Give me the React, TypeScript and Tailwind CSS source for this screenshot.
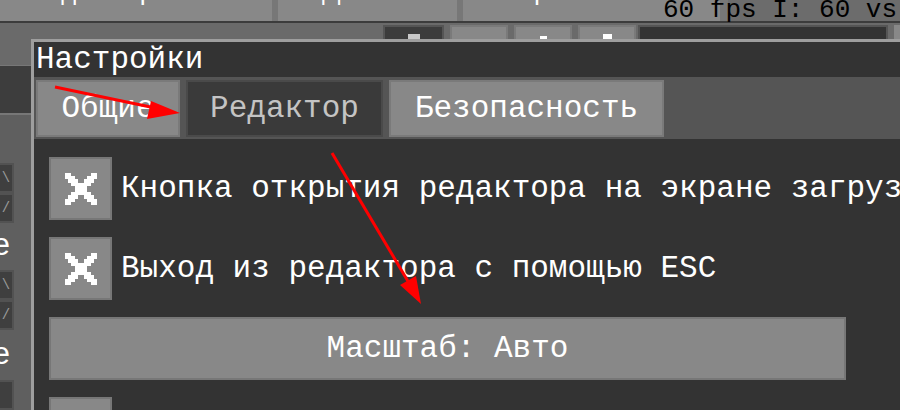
import React from 'react';

const X_ROWS = [
    '##......##',
    '###....###',
    '.###..###.',
    '..######..',
    '...####...',
    '...####...',
    '..######..',
    '.###..###.',
    '###....###',
    '##......##',
];

const PixelX = () => (
    <svg width="32" height="32" viewBox="0 0 10 10" shapeRendering="crispEdges">
        {X_ROWS.map((row, y) =>
            row.split('').map((c, x) =>
                c === '#' ? <rect key={`${x}-${y}`} x={x} y={y} width="1" height="1" fill="#ffffff" /> : null
            )
        )}
    </svg>
);

const Checkbox = ({ label }: { label?: string }) => (
    <div className="flex items-center gap-[9px] h-[63px] shrink-0">
        <div className="w-[63px] h-[63px] shrink-0 bg-[#888888] border-2 border-[#777777] flex items-center justify-center">
            <PixelX />
        </div>
        {label && <span className="text-white whitespace-nowrap leading-none">{label}</span>}
    </div>
);

const Tab = ({ label, active, w }: { label: string; active?: boolean; w: string }) => (
    <div
        className={`${w} h-[57px] shrink-0 border-2 flex items-center justify-center leading-none ${
            active ? 'bg-[#3a3a3a] border-[#4a4a4a] text-[#c4c4c4]' : 'bg-[#888888] border-[#7a7a7a] text-white'
        }`}
    >
        {label}
    </div>
);

const SideBox = ({ mark }: { mark: string }) => (
    <div className="w-[14px] h-[30px] bg-[#3f3f3f] border-2 border-l-0 border-[#525252] flex items-center justify-center text-[#9a9a9a] text-[14px] leading-none">
        {mark}
    </div>
);

export default function App() {
    return (
        <div className="w-[900px] h-[410px] overflow-hidden relative bg-[#5e5e5e] font-['Liberation_Mono',monospace] text-[31px]">
            {/* Top toolbar (cut off) */}
            <div className="flex h-[21px] bg-[#777777] overflow-hidden text-[26px] leading-none">
                <div className="w-[272px] bg-[#888888] relative overflow-hidden">
                    <span className="absolute left-[30px] top-[-20px] text-white whitespace-nowrap">Редактор объекта</span>
                </div>
                <div className="w-[179px] ml-[6px] bg-[#888888] relative overflow-hidden">
                    <span className="absolute left-[22px] top-[-20px] text-white whitespace-nowrap">Эффекты</span>
                </div>
                <div className="w-[257px] ml-[6px] bg-[#888888] relative overflow-hidden">
                    <span className="absolute left-[8px] top-[-20px] text-white whitespace-nowrap">Отображение</span>
                </div>
                <div className="flex-1 ml-[8px] bg-[#6c6c6c]" />
                <span className="absolute left-[663px] top-[-3px] text-black whitespace-nowrap text-[26px] leading-none">
                    60 fps I: 60 vs
                </span>
            </div>
            <div className="h-[2px] bg-[#3c3c3c]" />

            <div className="flex h-[387px]">
                {/* Left side panel (cut off) */}
                <div className="w-[31px] shrink-0 flex flex-col overflow-hidden">
                    <div className="h-[50px] bg-[#6a6a6a]" />
                    <div className="h-[2px] bg-[#777777]" />
                    <div className="h-[56px] bg-[#3d3d3d]" />
                    <div className="h-[2px] bg-[#777777]" />
                    <div className="flex-1 bg-[#5f5f5f] flex flex-col pt-[48px]">
                        <SideBox mark="\" />
                        <SideBox mark="/" />
                        <div className="h-[47px] flex items-center -ml-[8px] text-white leading-none">e</div>
                        <SideBox mark="\" />
                        <SideBox mark="/" />
                        <div className="h-[50px] flex items-center -ml-[8px] text-white leading-none">e</div>
                        <SideBox mark="" />
                    </div>
                </div>

                <div className="flex-1 flex flex-col min-w-0">
                    {/* Second toolbar row (behind dialog) */}
                    <div className="h-[16px] bg-[#6a6a6a] flex items-end pl-[352px] gap-[6px] overflow-hidden">
                        <div className="w-[61px] h-[14px] bg-[#3c3c3c] border-2 border-b-0 border-[#555555] flex items-end justify-center">
                            <div className="w-[12px] h-[5px] bg-[#c8c8c8]" />
                        </div>
                        <div className="w-[58px] h-[14px] bg-[#888888] border-2 border-b-0 border-[#7a7a7a]" />
                        <div className="w-[58px] h-[14px] bg-[#888888] border-2 border-b-0 border-[#7a7a7a] flex items-end justify-center">
                            <div className="w-[7px] h-[3px] bg-white" />
                        </div>
                        <div className="w-[58px] h-[14px] bg-[#888888] border-2 border-b-0 border-[#7a7a7a] flex items-end justify-center">
                            <div className="w-[9px] h-[5px] bg-white" />
                        </div>
                        <div className="w-[250px] h-[14px] bg-[#333333] border-2 border-b-0 border-[#555555] ml-[-4px]" />
                        <div className="flex-1 h-[14px] bg-[#888888]" />
                    </div>

                    {/* Settings dialog */}
                    <div className="flex-1 flex flex-col border-t-[3px] border-l-[3px] border-[#9e9e9e] bg-[#333333] min-h-0">
                        <div className="h-[35px] shrink-0 bg-[#333333] flex items-center pl-[2px] text-white leading-none">
                            Настройки
                        </div>
                        <div className="h-[62px] shrink-0 bg-[#555555] flex items-start pt-[3px] pl-[2px] gap-[6px]">
                            <Tab label="Общие" w="w-[144px]" />
                            <Tab label="Редактор" w="w-[197px]" active />
                            <Tab label="Безопасность" w="w-[275px]" />
                        </div>
                        <div className="flex-1 bg-[#333333] flex flex-col gap-[17px] pt-[18px] pl-[15px] overflow-hidden">
                            <Checkbox label="Кнопка открытия редактора на экране загрузки" />
                            <Checkbox label="Выход из редактора с помощью ESC" />
                            <div className="w-[797px] h-[63px] shrink-0 bg-[#888888] border-2 border-[#777777] flex items-center justify-center text-white leading-none">
                                Масштаб: Авто
                            </div>
                            <div className="w-[63px] h-[63px] shrink-0 bg-[#888888] border-2 border-[#777777]" />
                        </div>
                    </div>
                </div>
            </div>

            {/* Red annotation arrows */}
            <svg className="absolute inset-0 pointer-events-none" width="900" height="410">
                <line x1="55" y1="87" x2="160" y2="109" stroke="#ff0000" strokeWidth="3" />
                <polygon points="180,113 151,101 147,119" fill="#ff0000" />
                <line x1="332" y1="153" x2="409" y2="283" stroke="#ff0000" strokeWidth="3" />
                <polygon points="421,304 400,285 416,276" fill="#ff0000" />
            </svg>
        </div>
    );
}
